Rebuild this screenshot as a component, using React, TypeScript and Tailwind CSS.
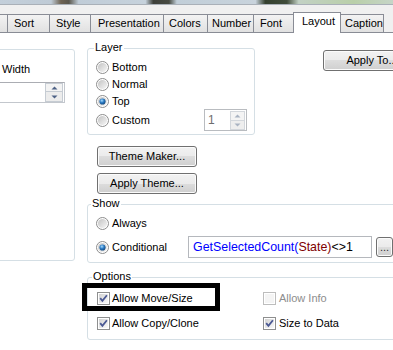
import React from "react";

function Radio({ id, checked }: { id: string; checked?: boolean }) {
  return (
    <svg width="13" height="13" viewBox="0 0 13 13" className="shrink-0">
      <defs>
        <linearGradient id={`${id}-in`} x1="0" y1="0" x2="1" y2="1">
          <stop offset="0" stopColor="#c2c2c2" />
          <stop offset="1" stopColor="#f7f7f7" />
        </linearGradient>
        <radialGradient id={`${id}-dot`} cx="0.4" cy="0.35" r="0.75">
          <stop offset="0" stopColor="#a9deff" />
          <stop offset="0.45" stopColor="#2c7bc4" />
          <stop offset="1" stopColor="#0b3a6b" />
        </radialGradient>
      </defs>
      <circle cx="6.5" cy="6.5" r="6" fill="#ffffff" stroke="#8d8d8d" />
      <circle cx="6.5" cy="6.5" r="4.6" fill={`url(#${id}-in)`} />
      {checked && <circle cx="6.5" cy="6.5" r="3.1" fill={`url(#${id}-dot)`} />}
    </svg>
  );
}

function Check({ id, checked, disabled }: { id: string; checked?: boolean; disabled?: boolean }) {
  return (
    <svg width="13" height="13" viewBox="0 0 13 13" className="shrink-0">
      <defs>
        <linearGradient id={`${id}-in`} x1="0" y1="0" x2="1" y2="1">
          <stop offset="0" stopColor="#d2d2d2" />
          <stop offset="1" stopColor="#fafafa" />
        </linearGradient>
      </defs>
      <rect x="0.5" y="0.5" width="12" height="12" fill="#ffffff" stroke={disabled ? "#bdbdbd" : "#8e8f8f"} />
      <rect x="2" y="2" width="9" height="9" fill={disabled ? "#f4f4f4" : `url(#${id}-in)`} />
      {checked && (
        <path d="M3.2 6.2 L5.4 8.8 L9.9 3.2" fill="none" stroke="#4a5893" strokeWidth="1.8" />
      )}
    </svg>
  );
}

function Tri({ up, color }: { up?: boolean; color: string }) {
  return (
    <svg width="7" height="4" viewBox="0 0 7 4">
      {up ? <path d="M0.5 3.5 L3.5 0.5 L6.5 3.5 Z" fill={color} /> : <path d="M0.5 0.5 L3.5 3.5 L6.5 0.5 Z" fill={color} />}
    </svg>
  );
}

function Tab({ label, className }: { label: string; className: string }) {
  return (
    <div
      className={`h-[18px] shrink-0 border-t border-[#898c95] bg-linear-to-b from-[#f3f3f3] to-[#e1e1e1] leading-[17px] whitespace-nowrap ${className}`}
    >
      {label}
    </div>
  );
}

const btn =
  "border border-[#707070] rounded-[3px] bg-[linear-gradient(#f2f2f2,#ebebeb_50%,#dddddd_50%,#cfcfcf)] shadow-[inset_0_0_0_1px_#fbfbfb] flex items-center justify-center whitespace-nowrap shrink-0";

export default function App() {
  return (
    <div className="w-[393px] h-[350px] overflow-hidden bg-[#f0f0f0] font-['Liberation_Sans',Arial,sans-serif] text-[11px] text-black">
      <div className="h-[4px] bg-[linear-gradient(90deg,#c3cfda_0%,#bfcbd6_13%,#6e6353_15.5%,#5a574d_17.5%,#c0ccd7_20%,#c6d2dc_37%,#3d403a_39%,#474b42_43%,#c1ced8_45%,#c8d3dc_65%,#34402f_67.5%,#404c3a_73%,#c2d1c4_76%,#b9cfa9_90%,#c6d5c7_100%)]" />
      <div className="h-px bg-[#a9b0b8]" />
      <div className="h-[7px]" />
      <div className="flex items-end h-[21px] border-b border-[#898c95]">
        <div className="w-[7px] h-[18px] shrink-0 border-t border-[#898c95] bg-linear-to-b from-[#f3f3f3] to-[#e1e1e1]" />
        <Tab label="Sort" className="w-[42px] pl-[6px] border-l" />
        <Tab label="Style" className="w-[41px] pl-[6px] border-l" />
        <Tab label="Presentation" className="w-[73px] pl-[7px] border-l" />
        <Tab label="Colors" className="w-[44px] pl-[5px] border-l" />
        <Tab label="Number" className="w-[46px] pl-[4px] border-l" />
        <Tab label="Font" className="w-[40px] pl-[6px] border-l" />
        <div className="relative z-10 -mb-px w-[48px] h-[21px] shrink-0 bg-white border-t border-x border-[#898c95] pl-[8px] leading-[16px]">
          Layout
        </div>
        <Tab label="Caption" className="w-[43px] pl-[4px] border-r" />
      </div>

      <div className="h-[317px] bg-white flex">
        {/* left group */}
        <div className="-ml-[6px] mt-[16px] w-[81px] h-[212px] shrink-0 border border-[#d5dfe5] rounded-[3px] flex flex-col">
          <div className="ml-[7px] mt-[13px] leading-[13px]">Width</div>
          <div className="mt-[6px] w-[70px] h-[21px] border border-[#c3c7cd] border-t-[#abadb3] bg-white flex justify-end items-center pr-px">
            <div className="flex flex-col w-[18px]">
              <div className="h-[9px] border border-[#c6ccd3] bg-[#f3f3f3] flex items-center justify-center">
                <Tri up color="#4d6185" />
              </div>
              <div className="h-[10px] border border-t-0 border-[#c6ccd3] bg-[#ececec] flex items-center justify-center">
                <Tri color="#4d6185" />
              </div>
            </div>
          </div>
        </div>

        {/* right column */}
        <div className="ml-[12px] flex flex-col">
          <div className="flex items-start mt-[15px]">
            <div className="relative w-[168px] h-[87px] shrink-0 border border-[#d5dfe5] rounded-[3px] flex flex-col pt-[10px] pl-[8px] pr-[7px]">
              <span className="absolute left-[6px] -top-[8px] bg-white px-px leading-[13px]">Layer</span>
              <div className="h-[17px] flex items-center gap-[3px]">
                <Radio id="r1" />
                <span>Bottom</span>
              </div>
              <div className="h-[17px] flex items-center gap-[3px]">
                <Radio id="r2" />
                <span>Normal</span>
              </div>
              <div className="h-[17px] flex items-center gap-[3px]">
                <Radio id="r3" checked />
                <span>Top</span>
              </div>
              <div className="-mt-px h-[22px] flex items-center gap-[3px]">
                <Radio id="r4" />
                <span>Custom</span>
                <div className="ml-auto w-[43px] h-[22px] border border-[#b9bcc0] bg-white flex items-center pl-[3px] pr-px text-[#6d6d6d] text-[12px]">
                  <span className="flex-1">1</span>
                  <div className="flex flex-col w-[15px]">
                    <div className="h-[10px] border border-[#d3d7dc] bg-[#f4f4f4] flex items-center justify-center">
                      <Tri up color="#a9b3c2" />
                    </div>
                    <div className="h-[9px] border border-t-0 border-[#d3d7dc] bg-[#eeeeee] flex items-center justify-center">
                      <Tri color="#a9b3c2" />
                    </div>
                  </div>
                </div>
              </div>
            </div>
            <div className={`${btn} ml-[68px] mt-[2px] w-[98px] h-[21px]`}>Apply To...</div>
          </div>

          <div className={`${btn} mt-[11px] ml-[10px] w-[100px] h-[21px]`}>Theme Maker...</div>
          <div className={`${btn} mt-[6px] ml-[10px] w-[100px] h-[21px]`}>Apply Theme...</div>

          {/* Show */}
          <div className="relative mt-[10px] w-[320px] h-[59px] border border-[#d5dfe5] rounded-[3px] flex flex-col pt-[10px] pl-[8px]">
            <span className="absolute left-[3px] -top-[8px] bg-white px-px leading-[13px]">Show</span>
            <div className="h-[17px] flex items-center gap-[3px]">
              <Radio id="r5" />
              <span>Always</span>
            </div>
            <div className="mt-[4px] h-[22px] flex items-center">
              <div className="w-[92px] flex items-center gap-[3px]">
                <Radio id="r6" checked />
                <span>Conditional</span>
              </div>
              <div className="w-[184px] h-[22px] border border-[#b5b8bd] bg-white flex items-center pl-[4px] text-[12.4px] whitespace-nowrap">
                <span className="text-[#0000ff]">GetSelectedCount(</span>
                <span className="text-[#800000]">State)</span>
                <span>&lt;&gt;1</span>
              </div>
              <div className={`${btn} ml-[4px] w-[17px] h-[20px] text-[#333] leading-none`}>...</div>
            </div>
          </div>

          {/* Options */}
          <div className="relative mt-[14px] w-[320px] h-[63px] border border-[#d5dfe5] rounded-[3px] flex flex-col pt-[12px] pl-[9px]">
            <span className="absolute left-[4px] -top-[8px] bg-white px-px leading-[13px]">Options</span>
            <div className="h-[17px] flex items-center">
              <div className="w-[166px] flex items-center gap-[2px]">
                <Check id="c1" checked />
                <span>Allow Move/Size</span>
              </div>
              <div className="flex items-center gap-[3px] text-[#8d8d8d]">
                <Check id="c2" disabled />
                <span>Allow Info</span>
              </div>
            </div>
            <div className="mt-[8px] h-[17px] flex items-center">
              <div className="w-[166px] flex items-center gap-[2px]">
                <Check id="c3" checked />
                <span>Allow Copy/Clone</span>
              </div>
              <div className="flex items-center gap-[3px]">
                <Check id="c4" checked />
                <span>Size to Data</span>
              </div>
            </div>
            <div className="absolute left-[-6px] top-[5px] w-[138px] h-[28px] border-[5px] border-black" />
          </div>
        </div>
      </div>
    </div>
  );
}
